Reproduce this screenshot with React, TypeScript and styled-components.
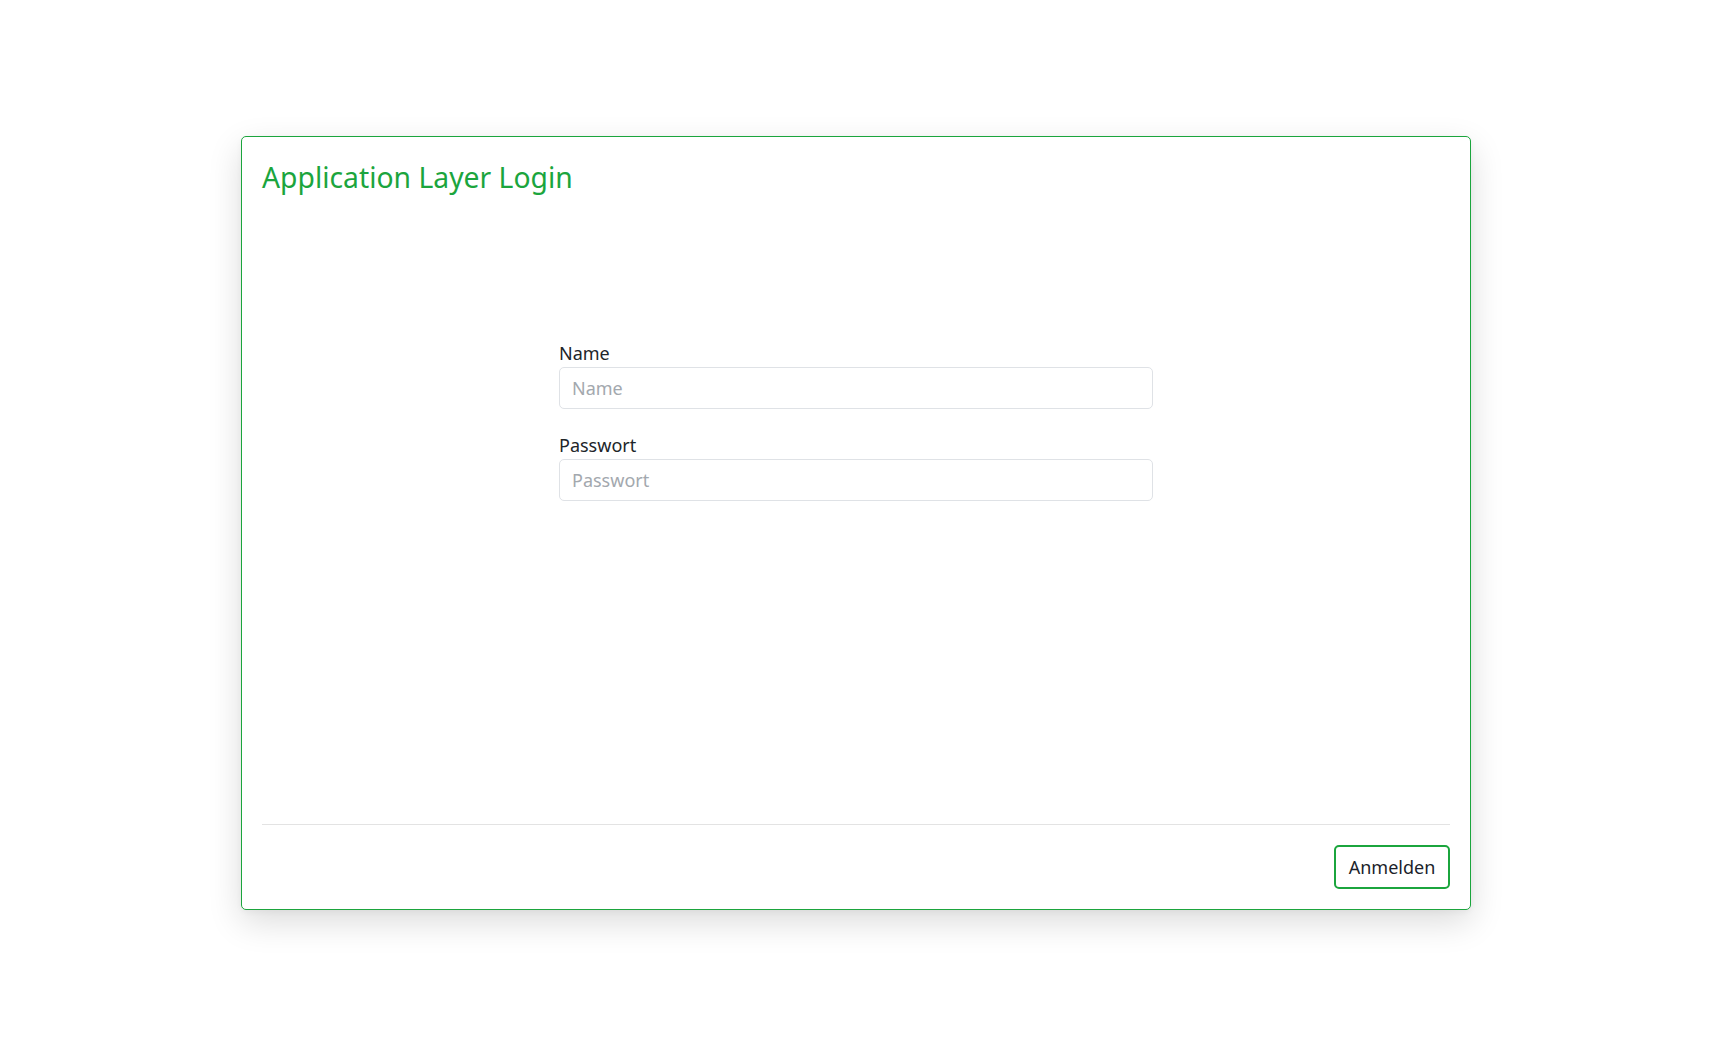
import React from "react";
import styled, { createGlobalStyle } from "styled-components";

const GREEN = "#1ba53d";

const Global = createGlobalStyle`
  html, body { margin: 0; padding: 0; background: #ffffff; }
  body { font-family: "Noto Sans", "Open Sans", sans-serif; color: #212529; }
  * { box-sizing: border-box; }
`;

const Page = styled.main`
  padding: 136px 246px 0 241px;
  min-height: 1050px;
`;

const Card = styled.section`
  width: 1230px;
  height: 774px;
  border: 1px solid ${GREEN};
  border-radius: 5px;
  background: #fff;
  box-shadow: 0 12px 34px rgba(0, 0, 0, 0.14), 0 2px 6px rgba(0, 0, 0, 0.04);
  padding: 20px;
  display: flex;
  flex-direction: column;
`;

const Title = styled.h3`
  margin: 0;
  font-size: 28.3px;
  line-height: 40px;
  font-weight: 400;
  color: ${GREEN};
`;

const Body = styled.div`
  flex: 1;
  display: flex;
  justify-content: center;
  align-items: flex-start;
`;

const Form = styled.form`
  width: 594px;
  margin-top: 143px;
`;

const Group = styled.div<{ $last?: boolean }>`
  margin-bottom: ${(p) => (p.$last ? 0 : 23)}px;
`;

const Label = styled.label`
  display: block;
  font-size: 18px;
  line-height: 27px;
  margin-bottom: 0;
  color: #212529;
`;

const Input = styled.input`
  display: block;
  width: 100%;
  height: 42px;
  padding: 0 12px;
  font-family: inherit;
  font-size: 18px;
  color: #212529;
  border: 1px solid #dfe2e6;
  border-radius: 5px;
  background: #fff;
  outline: none;
  &::placeholder { color: #a3a8ae; }
`;

const Footer = styled.footer`
  border-top: 1px solid #e3e3e3;
  padding-top: 20px;
  display: flex;
  justify-content: flex-end;
`;

const Button = styled.button`
  width: 116px;
  height: 44px;
  border: 2px solid ${GREEN};
  border-radius: 5px;
  background: #fff;
  font-family: inherit;
  font-size: 18px;
  color: #1c1f2b;
  cursor: pointer;
`;

export default function App() {
  return (
    <>
      <Global />
      <Page>
        <Card>
          <Title>Application Layer Login</Title>
          <Body>
            <Form onSubmit={(e) => e.preventDefault()}>
              <Group>
                <Label htmlFor="name">Name</Label>
                <Input id="name" type="text" placeholder="Name" />
              </Group>
              <Group $last>
                <Label htmlFor="pw">Passwort</Label>
                <Input id="pw" type="password" placeholder="Passwort" />
              </Group>
            </Form>
          </Body>
          <Footer>
            <Button type="button">Anmelden</Button>
          </Footer>
        </Card>
      </Page>
    </>
  );
}
